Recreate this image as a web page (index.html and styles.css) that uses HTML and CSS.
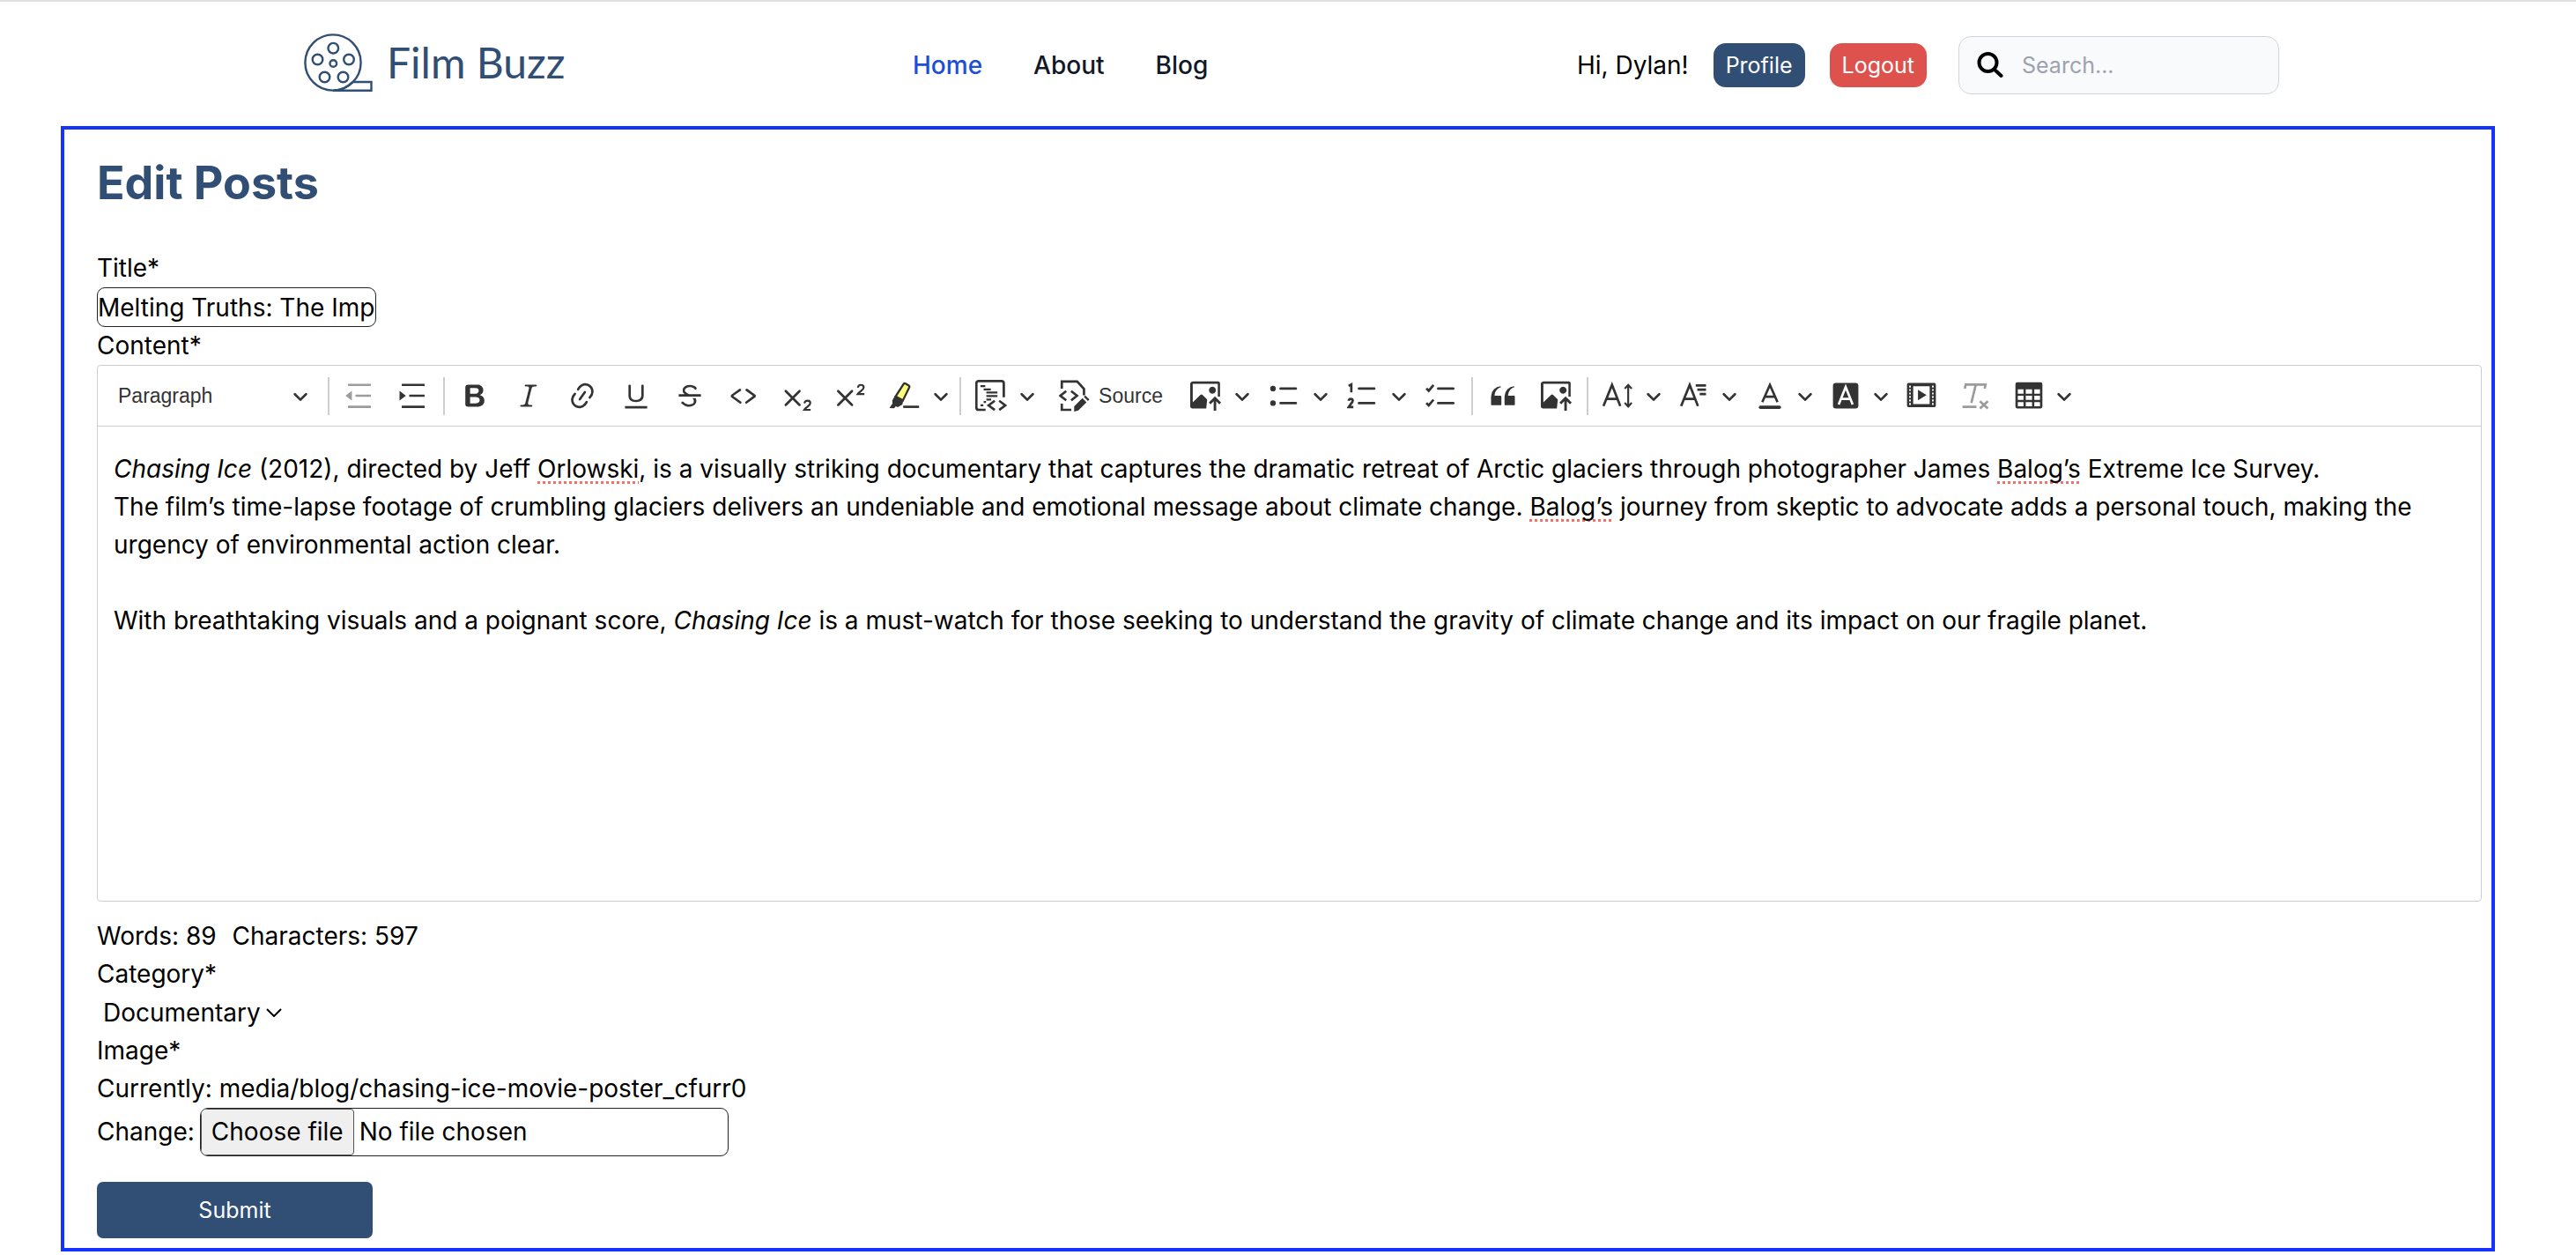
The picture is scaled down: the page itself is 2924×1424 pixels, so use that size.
FILE: index.html
```html
<!DOCTYPE html>
<html lang="en">
<head>
<meta charset="utf-8">
<title>Film Buzz</title>
<link rel="stylesheet" href="styles.css">
</head>
<body>
<svg class="defs" aria-hidden="true">
  <symbol id="chevron" viewBox="0 0 10 10"><path d="M.941 4.523a.75.75 0 1 1 1.06-1.06l3.006 3.005 3.005-3.005a.75.75 0 1 1 1.06 1.06l-3.549 3.55a.75.75 0 0 1-1.168-.136L.941 4.523z"/></symbol>
  <symbol id="image-upload" viewBox="0 0 20 20">
    <path fill-rule="evenodd" d="M1.900 1h15.700q1.200 0 1.200 1.200V10.500h-1.400V2.500H1.600V14.200L6.500 9.400q.6-.5 1.200 0l3 2.900-.6 5.700H1.200Q0 18 0 16.800V2.500Q.2 1 1.900 1zM14 4.300a2.200 2.200 0 1 0 .01 0z"/>
    <path d="M15.600 19.400V12M12.300 14.900l3.300-3.400 3.300 3.400" fill="none" stroke="currentColor" stroke-width="1.600"/>
  </symbol>
</svg>

<header class="site-header">
  <a class="brand" href="#">
    <svg class="reel" viewBox="0 0 78 66" fill="none" stroke="currentColor" stroke-width="2.400" aria-hidden="true">
      <circle cx="33" cy="33" r="31.600"/>
      <circle cx="33.300" cy="16.700" r="5.800"/><circle cx="15.500" cy="29.500" r="5.800"/><circle cx="51" cy="29.500" r="5.800"/>
      <circle cx="23.500" cy="49.500" r="5.800"/><circle cx="44.500" cy="49.500" r="5.800"/><circle cx="33.300" cy="34" r="3.800"/>
      <path d="M55 55h21.500v9.700H33q13 0 22-9.700"/>
    </svg>
    <span>Film Buzz</span>
  </a>
  <nav class="nav">
    <a class="active" href="#">Home</a>
    <a href="#">About</a>
    <a href="#">Blog</a>
  </nav>
  <div class="account">
    <span>Hi, Dylan!</span>
    <button class="pill" type="button">Profile</button>
    <button class="pill logout" type="button">Logout</button>
    <div class="search">
      <svg viewBox="0 0 30 30" fill="none" stroke="currentColor" stroke-width="4" stroke-linecap="round" aria-hidden="true"><circle cx="12.500" cy="12" r="10"/><path d="M19.500 19.500 27.500 27"/></svg>
      <input type="text" placeholder="Search..." aria-label="Search">
    </div>
  </div>
</header>

<main class="panel">
  <h1>Edit Posts</h1>
  <form>
    <label class="line" for="title">Title*</label>
    <input class="title-input" id="title" type="text" value="Melting Truths: The Impact of Chasing Ice">
    <div class="line" id="content-label">Content*</div>

    <div class="editor">
      <div class="toolbar" role="toolbar">
        <button class="heading" type="button">Paragraph<svg class="chev"><use href="#chevron"/></svg></button>
        <span class="sep"></span>
        <button class="tool off" type="button" aria-label="Decrease indent"><svg viewBox="0 0 20 20"><path d="M2.800 3.200h14.400M7.500 10h9.700M2.800 17h14.400" class="ln"/><path d="M1.200 10 5.200 7v6z"/></svg></button>
        <button class="tool" type="button" aria-label="Increase indent"><svg viewBox="0 0 20 20"><path d="M2.800 3.200h14.400M7.500 10h9.700M2.800 17h14.400" class="ln"/><path d="M5.400 10 1.400 7v6z"/></svg></button>
        <span class="sep"></span>
        <button class="tool" type="button" aria-label="Bold"><svg viewBox="0 0 20 20"><path d="M10.187 17H5.773c-.637 0-1.092-.138-1.364-.415-.273-.277-.409-.718-.409-1.323V4.738c0-.617.14-1.062.419-1.332.279-.27.73-.406 1.354-.406h4.680c.69 0 1.288.041 1.793.124.506.083.96.242 1.360.478.341.197.644.447.906.75a3.262 3.262 0 0 1 .808 2.162c0 1.401-.722 2.426-2.167 3.075C15.050 10.175 16 11.315 16 13.010a3.756 3.756 0 0 1-2.296 3.504 6.100 6.100 0 0 1-1.517.377c-.571.073-1.238.11-2 .11zm-.217-6.217H7v4.087h3.069c1.977 0 2.965-.69 2.965-2.072 0-.707-.256-1.220-.768-1.537-.512-.319-1.277-.478-2.296-.478zM7 5.130v3.619h2.606c.729 0 1.292-.067 1.690-.2a1.600 1.600 0 0 0 .91-.765c.165-.267.247-.566.247-.897 0-.707-.26-1.176-.778-1.409-.519-.232-1.310-.348-2.375-.348H7z"/></svg></button>
        <button class="tool" type="button" aria-label="Italic"><svg viewBox="0 0 20 20"><path d="m9.586 14.633.021.004c-.036.335.095.655.393.962.082.083.173.15.274.201h1.474a.6.6 0 1 1 0 1.200H5.304a.6.6 0 0 1 0-1.200h1.150c.474-.07.809-.182 1.005-.334.157-.122.291-.32.404-.597l2.416-9.550a1.053 1.053 0 0 0-.281-.823 1.120 1.120 0 0 0-.442-.296H8.150a.6.6 0 0 1 0-1.200h6.443a.6.6 0 1 1 0 1.200h-1.195c-.376.056-.65.155-.823.296-.215.175-.423.439-.623.79l-2.366 9.347z"/></svg></button>
        <button class="tool" type="button" aria-label="Link"><svg viewBox="0 0 20 20"><path d="m11.077 15 .991-1.416a.75.75 0 1 1 1.229.86l-1.148 1.640a.748.748 0 0 1-.217.206 5.251 5.251 0 0 1-8.503-5.955.741.741 0 0 1 .12-.274l1.147-1.639a.75.75 0 1 1 1.228.86L4.933 10.700l.006.003a3.750 3.750 0 0 0 6.132 4.294l.006.004zm5.494-5.335a.748.748 0 0 1-.12.274l-1.147 1.639a.75.75 0 1 1-1.228-.86l.86-1.230a3.750 3.750 0 0 0-6.144-4.301l-.86 1.229a.75.75 0 0 1-1.229-.86l1.148-1.640a.748.748 0 0 1 .217-.206 5.251 5.251 0 0 1 8.503 5.955zm-4.563-2.532a.75.75 0 0 1 .184 1.045l-3.155 4.505a.75.75 0 1 1-1.229-.86l3.155-4.506a.75.75 0 0 1 1.045-.184z"/></svg></button>
        <button class="tool" type="button" aria-label="Underline"><svg viewBox="0 0 20 20"><path d="M3 18v-1.500h14V18zM5.200 10V3.600c0-.4.4-.6.8-.6.3 0 .7.2.7.6v6.200c0 2 1.300 2.800 3.200 2.800 1.900 0 3.400-.9 3.400-2.900V3.600c0-.3.4-.5.8-.5.3 0 .7.2.7.5V10c0 2.700-2.200 4-4.900 4-2.600 0-4.700-1.200-4.700-4z"/></svg></button>
        <button class="tool" type="button" aria-label="Strikethrough"><svg viewBox="0 0 20 20"><path d="M7 16.400c-.8-.4-1.500-.9-2.200-1.500a.6.6 0 0 1-.2-.5l.3-.6h1c1 1.200 2.100 1.700 3.700 1.700 1 0 1.800-.3 2.300-.6.6-.4.6-1.200.6-1.300.2-1.200-.9-2.100-.9-2.100h2.100c.3.7.4 1.200.4 1.700v.8l-.6 1.200c-.6.8-1.100 1-1.600 1.200a6 6 0 0 1-2.400.6c-1 0-1.800-.3-2.500-.6zM6.800 9 6 8.300c-.4-.5-.5-.8-.5-1.600 0-.7.1-1.300.5-1.800.4-.6 1-1 1.600-1.300a6.300 6.300 0 0 1 4.700 0 4 4 0 0 1 1.700 1l.3.7c0 .1.2.4-.2.7-.4.2-.9.1-1 0a3 3 0 0 0-1.200-1c-.4-.2-1-.3-2-.4-.7 0-1.400.2-2 .6-.8.6-1 .8-1 1.500 0 .8.5 1 1.200 1.500.6.4 1.100.7 1.900 1H6.800zM3 10.500V9h14v1.500z"/></svg></button>
        <button class="tool" type="button" aria-label="Code"><svg viewBox="0 0 20 20"><path d="m12.500 5.700 5.200 3.900v1.300l-5.600 4c-.1.200-.3.200-.5.200-.3-.1-.6-.7-.6-1l.3-.4 4.700-3.500L11.500 7l-.2-.2c-.1-.3-.1-.6 0-.8.2-.2.5-.4.8-.4a.8.8 0 0 1 .4.1zm-5.200 0L2 9.600v1.300l5.600 4c.1.200.3.200.5.200.3-.1.7-.7.6-1 0-.1 0-.3-.2-.4l-5-3.500L8.200 7l.2-.2c.1-.3.1-.6 0-.8-.2-.2-.5-.4-.8-.4a.8.8 0 0 0-.3.1z"/></svg></button>
        <button class="tool" type="button" aria-label="Subscript"><svg viewBox="0 0 20 20"><path d="m2.700 7.100 8.700 8.700m0-8.700-8.700 8.700" class="ln rnd"/><path d="M14.500 14.800q.3-1.700 1.900-1.700 1.800 0 1.800 1.500 0 1-1.700 2.300-1.500 1.100-2.100 2h4" class="ln thin"/></svg></button>
        <button class="tool" type="button" aria-label="Superscript"><svg viewBox="0 0 20 20"><path d="m1.900 7.100 8.700 8.700m0-8.700-8.700 8.700" class="ln rnd"/><path d="M14.300 4.900q.3-1.700 1.900-1.700 1.800 0 1.800 1.500 0 1-1.700 2.300-1.500 1.100-2.100 2h4.200" class="ln thin"/></svg></button>
        <button class="tool" type="button" aria-label="Highlight"><svg viewBox="0 0 20 20"><path fill="#fdfb7a" stroke="currentColor" stroke-width="1.300" d="m4.200 10.500 5-7.800q.5-.8 1.300-.3l2 1.200q.7.5.3 1.300l-4 8.100z"/><path d="m3.800 10 5.200 3.300-.5 2.200-2.900 1.700-1.300-.6-1 1.300-3-.1 2-2.900-.2-1.900z"/><path d="M9 17h10" class="ln"/></svg></button><button class="arrow" type="button" aria-label="Highlight colours"><svg class="chev"><use href="#chevron"/></svg></button>
        <span class="sep"></span>
        <button class="tool" type="button" aria-label="Code block"><svg viewBox="0 0 20 20"><path d="M6.500 18.900H2.200q-1.500 0-1.500-1.500V2.300Q.7.800 2.200.8h14.300q1.500 0 1.500 1.500V11" class="ln"/><path d="M3.300 4h3M5.300 6h4.500M7 8h7M7 10.200h7M7 12.400h3M5.300 14h1.500M3.300 16h1.800" class="ln thin"/><path d="m12.300 13.200-3.900 2.900 3.900 2.900m2.800-5.800 3.900 2.900-3.900 2.900" class="ln"/></svg></button><button class="arrow" type="button" aria-label="Code languages"><svg class="chev"><use href="#chevron"/></svg></button>
        <button class="tool source" type="button"><svg viewBox="0 0 20 20"><path d="M1.800 5.500V1H11.500l4.300 4.700v4M1.800 15v3.900h6" class="ln"/><path d="M4.600 7.100.9 10l3.700 2.900m3.100-5.800 3.700 2.900-3.700 2.900" class="ln"/><path d="m9.600 16.700 5.200-5.200 2.600 2.600-5.200 5.200-2.600.7zM15.700 10.700l.9-.9 2.600 2.600-.9.900z"/></svg>Source</button>
        <button class="tool" type="button" aria-label="Image"><svg viewBox="0 0 20 20"><use href="#image-upload"/></svg></button><button class="arrow" type="button" aria-label="Image options"><svg class="chev"><use href="#chevron"/></svg></button>
        <button class="tool" type="button" aria-label="Bulleted list"><svg viewBox="0 0 20 20"><circle cx="2.750" cy="5.500" r="1.750"/><circle cx="2.750" cy="14.700" r="1.750"/><path d="M7.500 5.500h9.700M7.500 14.700h9.700" class="ln rnd"/></svg></button><button class="arrow" type="button" aria-label="Bullet styles"><svg class="chev"><use href="#chevron"/></svg></button>
        <button class="tool" type="button" aria-label="Numbered list"><svg viewBox="0 0 20 20"><path d="M1 3.800 2.700 2.900v5M1 13.200q.3-1.200 1.400-1.200t1.200 1q0 .8-1.100 2L1 17.200h3" class="ln"/><path d="M7.500 5.500h9.700M7.500 14.700h9.700" class="ln rnd"/></svg></button><button class="arrow" type="button" aria-label="Number styles"><svg class="chev"><use href="#chevron"/></svg></button>
        <button class="tool" type="button" aria-label="To-do list"><svg viewBox="0 0 20 20"><path d="m.6 5.400 1.500 1.500 3-3.600M.6 14.600l1.500 1.500 3-3.600" class="ln"/><path d="M8 5.500h9.600M8 14.700h9.600" class="ln rnd"/></svg></button>
        <span class="sep"></span>
        <button class="tool" type="button" aria-label="Block quote"><svg viewBox="0 0 20 20"><path d="M2.500 10.423a6.500 6.500 0 0 1 6.056-6.408l.038.67C5.948 5.423 4.854 7.663 4.720 10H8.500c.552 0 .5.432.5.986v4.511c0 .554-.448.503-1 .503H3c-.552 0-.5-.449-.5-1.003zm8.500 0a6.500 6.500 0 0 1 6.056-6.408l.038.67c-2.646.739-3.740 2.979-3.873 5.315H17c.552 0 .5.432.5.986v4.511c0 .554-.448.503-1 .503h-5c-.552 0-.5-.449-.5-1.003z"/></svg></button>
        <button class="tool" type="button" aria-label="Upload image"><svg viewBox="0 0 20 20"><use href="#image-upload"/></svg></button>
        <span class="sep"></span>
        <button class="tool" type="button" aria-label="Font size"><svg viewBox="0 0 20 20"><path d="M.6 16.500 6 3.200l5.200 13.300M2.300 12h7.300" class="ln"/><path d="M16.200 3.500v13M14 5.600l2.200-2.400 2.200 2.400M14 14.500l2.200 2.400 2.200-2.400" class="ln thin"/></svg></button><button class="arrow menu" type="button" aria-label="Sizes"><svg class="chev"><use href="#chevron"/></svg></button>
        <button class="tool" type="button" aria-label="Font family"><svg viewBox="0 0 20 20"><path d="M1.800 16.500 7.200 3.200l5.200 13.300M3.500 12h7.300" class="ln"/><path d="M11 3.500h6.500M12 6.200h5.500M13.500 9h4" class="ln"/></svg></button><button class="arrow menu" type="button" aria-label="Families"><svg class="chev"><use href="#chevron"/></svg></button>
        <button class="tool" type="button" aria-label="Font colour"><svg viewBox="0 0 20 20"><path d="M5.200 14 10 3.200 14.800 14M6.600 10.600h6.800" class="ln"/><path d="M4 17.300h12" stroke="currentColor" stroke-width="2" stroke-linecap="round"/></svg></button><button class="arrow menu" type="button" aria-label="Text colours"><svg class="chev"><use href="#chevron"/></svg></button>
        <button class="tool" type="button" aria-label="Font background"><svg viewBox="0 0 20 20"><rect x="2" y="2" width="16" height="16" rx="1.800"/><path d="M5.600 15.500 10 4.500l4.400 11M7 12h6" fill="none" stroke="#fff" stroke-width="1.500"/></svg></button><button class="arrow menu" type="button" aria-label="Background colours"><svg class="chev"><use href="#chevron"/></svg></button>
        <button class="tool" type="button" aria-label="Media"><svg viewBox="0 0 20 20"><path fill-rule="evenodd" d="M1.800 2h16.400q.9 0 .9.900v13.400q0 .9-.9.900H1.800q-.9 0-.9-.9V2.900q0-.9.9-.9zM4.800 4v11.300h10.400V4z"/><path d="M2.800 3.600v12.500M17.200 3.600v12.500" fill="none" stroke="#fff" stroke-width="1" stroke-dasharray="1.200 1"/><path d="m7.800 6.300 5.400 3.300-5.400 3.300z"/></svg></button>
        <button class="tool off" type="button" aria-label="Remove format"><svg viewBox="0 0 20 20"><path d="M3.500 5.500 4 3h12.500l-.5 2.500M10.400 3 7.600 14.500M2 17h8.800" class="ln"/><path d="m13 13.500 5 4.500m0-4.500L13 18" class="ln"/></svg></button>
        <button class="tool" type="button" aria-label="Table"><svg viewBox="0 0 20 20"><path fill-rule="evenodd" d="M2.600 1.500h14.800q1.100 0 1.100 1.300v14q0 1.200-1.100 1.200H2.600q-1.100 0-1.100-1.200v-14q0-1.300 1.100-1.300zM3 6v2.700h3.600V6zm5 0v2.700h4V6zm5.400 0v2.700H17V6zM3 10v2.700h3.600V10zm5 0v2.700h4V10zm5.400 0v2.700H17V10zM3 14v2.700h3.600V14zm5 0v2.700h4V14zm5.400 0v2.700H17V14z"/></svg></button><button class="arrow menu" type="button" aria-label="Table size"><svg class="chev"><use href="#chevron"/></svg></button>
      </div>
      <div class="editable" contenteditable="true" spellcheck="false" role="textbox" aria-multiline="true" aria-labelledby="content-label">
        <p><i>Chasing Ice</i> (2012), directed by Jeff <span class="typo">Orlowski</span>, is a visually striking documentary that captures the dramatic retreat of Arctic glaciers through photographer James <span class="typo">Balog’s</span> Extreme Ice Survey.</p>
        <p>The film’s time-lapse footage of crumbling glaciers delivers an undeniable and emotional message about climate change. <span class="typo">Balog’s</span> journey from skeptic to advocate adds a personal touch, making the urgency of environmental action clear.</p>
        <p><br></p>
        <p>With breathtaking visuals and a poignant score, <i>Chasing Ice</i> is a must-watch for those seeking to understand the gravity of climate change and its impact on our fragile planet.</p>
      </div>
    </div>

    <div class="counts"><span>Words: 89</span><span>Characters: 597</span></div>
    <label class="line" for="category">Category*</label>
    <div class="select">
      <select id="category"><option>Documentary</option></select>
      <svg viewBox="0 0 18 10" aria-hidden="true"><path d="m1 1 8 8 8-8" fill="none" stroke="currentColor" stroke-width="2"/></svg>
    </div>
    <div class="line">Image*</div>
    <div class="line">Currently: media/blog/chasing-ice-movie-poster_cfurr0</div>
    <div class="change">
      <span>Change:</span>
      <label class="file"><input type="file" aria-label="Image"><span class="choose">Choose file</span><span>No file chosen</span></label>
    </div>
    <button class="submit" type="submit">Submit</button>
  </form>
</main>
</body>
</html>
```
FILE: styles.css
```css
* { box-sizing: border-box; }
body {
  margin: 0;
  border-top: 2px solid #e0e0e0;
  background: #fff;
  color: #000;
  font: 28px/43px Inter, "Liberation Sans", sans-serif;
}
h1, p { margin: 0; }
button, input, select { font: inherit; color: inherit; margin: 0; }
button { border: 0; padding: 0; background: none; }
a { text-decoration: none; }
.defs { display: none; }

.site-header {
  display: flex;
  align-items: center;
  justify-content: space-between;
  height: 141px;
  padding: 3px 337px 0 345px;
}
.brand {
  display: flex;
  align-items: center;
  gap: 16px;
  margin-bottom: 6px;
  color: #314e75;
  font: 48px/66px Lato, sans-serif;
}
.reel { width: 78px; height: 66px; }
.nav { display: flex; gap: 58px; padding-right: 24px; font-weight: 500; }
.nav a { color: #111827; }
.nav .active { color: #1d4ed8; }
.account { display: flex; align-items: center; gap: 28px; }
.pill {
  height: 50px;
  padding: 0 14px;
  border-radius: 14px;
  background: #314e75;
  color: #fff;
  font-size: 25px;
}
.logout { background: #dd524c; }
.search {
  display: flex;
  align-items: center;
  gap: 21px;
  width: 364px;
  height: 66px;
  margin-left: 8px;
  padding: 0 20px;
  border: 1px solid #d1d5db;
  border-radius: 14px;
  background: #f9fafb;
}
.search svg { flex: none; width: 30px; height: 30px; }
.search input { flex: 1; min-width: 0; border: 0; padding: 0; background: none; font-size: 25px; }
.search input::placeholder { color: #9ca3af; }

.panel {
  margin: 0 92px 4px 69px;
  padding: 28px 11px 11px 37px;
  border: 4px solid #1533ff;
}
h1 {
  margin-bottom: 43px;
  color: #314e75;
  font-size: 52px;
  line-height: 65px;
  font-weight: 700;
}
.line { display: block; }
.title-input {
  display: block;
  width: 317px;
  height: 45px;
  padding: 0;
  border: 1px solid #222;
  border-radius: 9px;
  background: #fff;
}

.editor { border: 1px solid #ccced1; border-radius: 4px; color: #333; }
.toolbar {
  display: flex;
  align-items: center;
  height: 69px;
  padding: 0 7px;
  border-bottom: 1px solid #ccced1;
  font: 23px/43px "Liberation Sans", Arial, sans-serif;
}
.toolbar > * + * { margin-left: 7px; }
.toolbar > .arrow { margin-left: 0; }
.toolbar svg { flex: none; fill: currentColor; }
.heading {
  display: flex;
  align-items: center;
  justify-content: space-between;
  width: 247px;
  padding: 0 15px 0 16px;
}
.sep { width: 2px; height: 43px; background: #ccced1; }
.tool { display: flex; align-items: center; justify-content: center; width: 54px; height: 54px; }
.tool svg { width: 36px; height: 36px; }
.off { color: #9c9c9c; }
.source { gap: 9px; width: 148px; }
.arrow { display: flex; align-items: center; justify-content: center; width: 28px; height: 54px; }
.menu { width: 25px; }
.toolbar .chev { width: 18px; height: 18px; }
.toolbar .ln { fill: none; stroke: currentColor; stroke-width: 1.500; }
.toolbar .thin { stroke-width: 1.200; }
.toolbar .rnd { stroke-linecap: round; }
.editable { min-height: 538px; padding: 27px 18px; color: #000; outline: 0; }
.typo { text-decoration: underline dotted #f0706a 3px; text-underline-offset: 4px; text-decoration-skip-ink: none; }

.counts { display: flex; gap: 18px; padding-top: 18px; }
.select { display: flex; align-items: center; gap: 6px; height: 44px; padding-left: 7px; }
.select select { appearance: none; border: 0; padding: 0; background: none; }
.select svg { width: 18px; height: 10px; }
.change { display: flex; align-items: center; gap: 6px; }
.file {
  position: relative;
  display: flex;
  align-items: center;
  gap: 6px;
  width: 600px;
  height: 55px;
  border: 1px solid #222;
  border-radius: 9px;
  overflow: hidden;
}
.file input { position: absolute; inset: 0; opacity: 0; }
.choose {
  height: 53px;
  padding: 4px 11px;
  border: 1px solid #555;
  border-radius: 4px;
  background: #efefef;
}
.submit {
  display: block;
  width: 313px;
  height: 64px;
  margin-top: 29px;
  border-radius: 7px;
  background: #314e75;
  color: #fff;
  font-size: 25px;
}
```
